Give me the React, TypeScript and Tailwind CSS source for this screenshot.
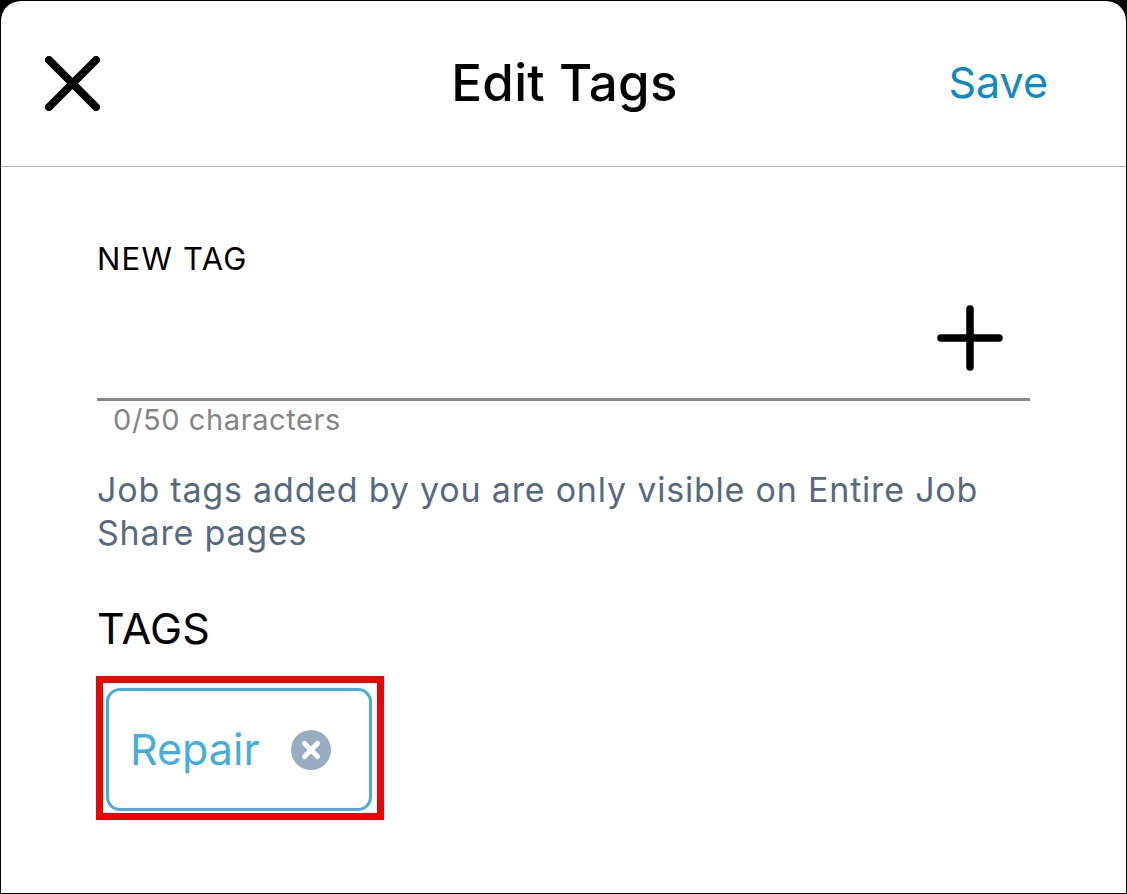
import React from 'react';

export default function App() {
  return (
    <div className="h-[894px] w-[1127px] bg-black p-px font-['Inter',sans-serif]">
      <div className="flex h-full flex-col rounded-t-[20px] bg-white">
        {/* Header */}
        <div className="relative flex h-[166px] items-center justify-center border-b border-[#b3b3b3] pb-[3px] pl-[2px]">
          <svg className="absolute left-[44px] top-[55px] h-[55px] w-[55px]" viewBox="0 0 55 55" fill="none">
            <path d="M4 4 L51 51 M51 4 L4 51" stroke="#000" strokeWidth="8" strokeLinecap="round" />
          </svg>
          <h1 className="text-[51px] font-medium leading-none tracking-[0.3px] text-black">Edit Tags</h1>
          <button className="absolute right-[78px] top-[57px] text-[43px] leading-[48px] text-[#1089c4]">Save</button>
        </div>

        {/* Form */}
        <div className="flex flex-col px-[96px] pt-[74px]">
          <label className="text-[31px] leading-[35px] tracking-[1.2px] text-black">NEW TAG</label>
          <div className="flex h-[125px] items-center justify-end border-b-[3px] border-[#888888] pr-[27px] pt-[2px]">
            <svg className="h-[66px] w-[66px]" viewBox="0 0 66 66" fill="none">
              <path d="M33 4 V62 M4 33 H62" stroke="#000" strokeWidth="7.5" strokeLinecap="round" />
            </svg>
          </div>
          <p className="pl-[16px] text-[29px] leading-[38px] tracking-[0.6px] text-[#858585]">0/50 characters</p>
          <p className="mt-[29px] text-[34px] leading-[43px] tracking-[0.8px] text-[#566a7f]">
            Job tags added by you are only visible on Entire Job Share pages
          </p>
          <h2 className="mt-[49px] text-[43px] leading-[50px] tracking-[0.3px] text-black">TAGS</h2>

          {/* Highlighted tag */}
          <div className="-ml-px mt-[23px] w-fit border-[7px] border-[#e80606] pb-[2px] pl-[3px] pr-[5px] pt-[5px]">
            <div className="flex h-[123px] w-[266px] items-center gap-[31px] rounded-[14px] border-[3px] border-[#44aedd] pl-[21px]">
              <span className="text-[43px] leading-none text-[#44aedd]">Repair</span>
              <svg className="h-[40px] w-[40px]" viewBox="0 0 40 40">
                <circle cx="20" cy="20" r="20" fill="#98adc1" />
                <path d="M13.5 13.5 L26.5 26.5 M26.5 13.5 L13.5 26.5" stroke="#fff" strokeWidth="5" strokeLinecap="round" />
              </svg>
            </div>
          </div>
        </div>
      </div>
    </div>
  );
}
